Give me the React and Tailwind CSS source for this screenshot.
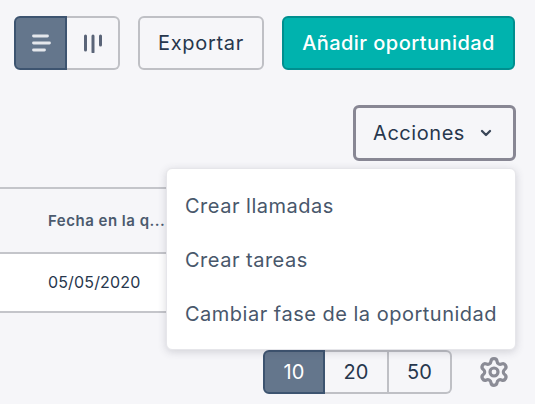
import React from 'react';
import { ChevronDown, Settings } from 'lucide-react';

function ListIcon() {
  return (
    <svg width="20" height="20" viewBox="0 0 20 20" fill="none" stroke="#e4e7ec" strokeWidth="2.8" strokeLinecap="round">
      <path d="M2.5 3h14" />
      <path d="M2.5 10h16" />
      <path d="M2.5 17h11" />
    </svg>
  );
}

function BoardIcon() {
  return (
    <svg width="20" height="20" viewBox="0 0 20 20" fill="none" stroke="#5a6478" strokeWidth="3" strokeLinecap="round">
      <path d="M2.5 3v14" />
      <path d="M10 3v16" />
      <path d="M17.5 3v9" />
    </svg>
  );
}

export default function App() {
  return (
    <div className="relative h-[404px] w-[535px] overflow-hidden bg-[#f6f6f9] font-['Inter',sans-serif] text-[#27374d]">
      <div className="flex pl-[14px] pt-4">
        <div className="flex h-[54px]">
          <button className="flex w-[53px] items-center justify-center rounded-l-md border-2 border-[#3d5470] bg-[#64768c]">
            <ListIcon />
          </button>
          <button className="flex w-[53px] items-center justify-center rounded-r-md border-2 border-l-0 border-[#bfc0c5]">
            <BoardIcon />
          </button>
        </div>
        <button className="ml-[18px] h-[54px] w-[126px] rounded-md border-2 border-[#bfc0c5] text-[20px] font-normal tracking-[0.7px]">
          Exportar
        </button>
        <button className="ml-[18px] h-[54px] w-[233px] rounded-md border-2 border-[#008f8f] bg-[#00b3ae] text-[20px] font-medium tracking-[0.45px] text-white">
          Añadir oportunidad
        </button>
      </div>

      <div className="mt-[35px] flex justify-end pr-[19px]">
        <button className="flex h-[56px] w-[163px] items-center justify-center gap-[13px] rounded-md border-[3px] border-[#888794] pr-[2px] text-[20px] font-normal tracking-[0.55px]">
          Acciones
          <ChevronDown size={16} strokeWidth={3.5} className="text-[#3a4658]" />
        </button>
      </div>

      <div className="mt-[26px] w-[400px]">
        <div className="flex h-[67px] items-center border-y-2 border-[#c4c5ca] pl-[48px] pt-[2px] text-[15px] font-semibold tracking-[0.5px] text-[#4b5a6e]">
          Fecha en la q...
        </div>
        <div className="-mt-[2px] flex h-[61px] items-center border-y-2 border-[#c4c5ca] bg-white pb-[2px] pl-[48px] text-[16px] tracking-[0.15px]">
          05/05/2020
        </div>
      </div>

      <div className="mt-[37px] flex items-center pl-[263px]">
        <div className="flex h-[44px] text-[20px]">
          <span className="flex w-[62px] items-center justify-center rounded-l-md border-2 border-[#3d5470] bg-[#64768c] text-white">10</span>
          <span className="flex w-[64px] items-center justify-center border-y-2 border-r-2 border-[#bfc0c5]">20</span>
          <span className="flex w-[63px] items-center justify-center rounded-r-md border-y-2 border-r-2 border-[#bfc0c5]">50</span>
        </div>
        <Settings size={32} strokeWidth={2.4} className="ml-[26px] text-[#8b8c96]" />
      </div>

      <div className="absolute left-[166px] top-[168px] h-[182px] w-[350px] rounded-md border border-[#e6e6ea] bg-white pl-[18px] pt-[10px] text-[20px] tracking-[0.5px] text-[#48576b] shadow-[0_2px_8px_rgba(60,60,80,0.2)]">
        <div className="flex h-[54px] items-center">Crear llamadas</div>
        <div className="flex h-[54px] items-center">Crear tareas</div>
        <div className="flex h-[54px] items-center">Cambiar fase de la oportunidad</div>
      </div>
    </div>
  );
}
